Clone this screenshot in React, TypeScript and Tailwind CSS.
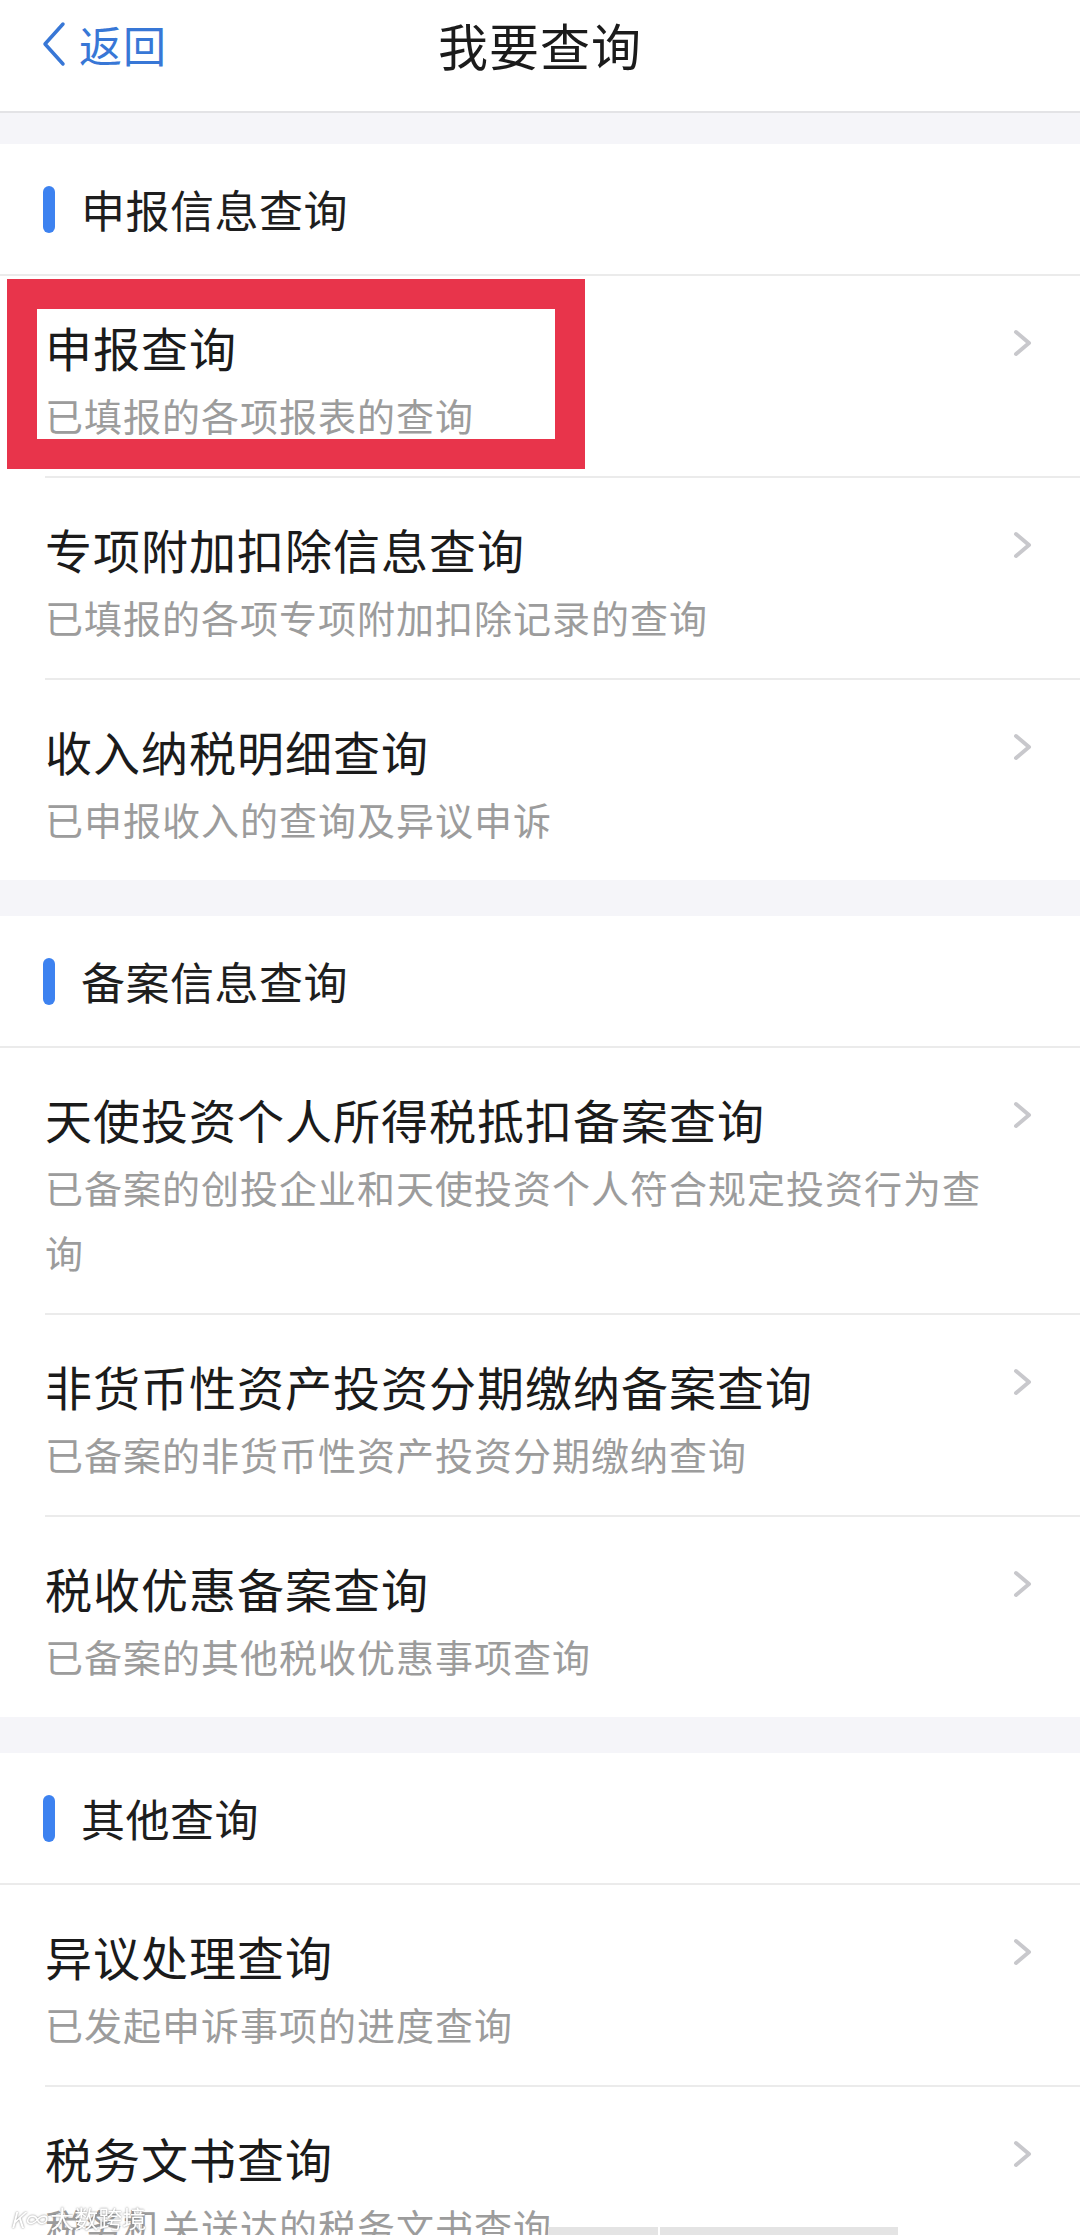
import React from "react";

interface QueryItem {
    title: string;
    desc: string;
    marked?: boolean;
}

interface QuerySection {
    name: string;
    items: QueryItem[];
}

const sections: QuerySection[] = [
    {
        name: "申报信息查询",
        items: [
            { title: "申报查询", desc: "已填报的各项报表的查询", marked: true },
            { title: "专项附加扣除信息查询", desc: "已填报的各项专项附加扣除记录的查询" },
            { title: "收入纳税明细查询", desc: "已申报收入的查询及异议申诉" },
        ],
    },
    {
        name: "备案信息查询",
        items: [
            { title: "天使投资个人所得税抵扣备案查询", desc: "已备案的创投企业和天使投资个人符合规定投资行为查询" },
            { title: "非货币性资产投资分期缴纳备案查询", desc: "已备案的非货币性资产投资分期缴纳查询" },
            { title: "税收优惠备案查询", desc: "已备案的其他税收优惠事项查询" },
        ],
    },
    {
        name: "其他查询",
        items: [
            { title: "异议处理查询", desc: "已发起申诉事项的进度查询" },
            { title: "税务文书查询", desc: "税务机关送达的税务文书查询" },
        ],
    },
];

const Chevron = () => (
    <svg width="21" height="30" viewBox="0 0 21 30" fill="none">
        <polyline points="4,4 17,15 4,26" stroke="#c8c8cc" strokeWidth="4" strokeLinecap="round" strokeLinejoin="round" />
    </svg>
);

const Row = ({ item, first }: { item: QueryItem; first: boolean }) => (
    <div className="relative">
        {!first && <div className="ml-[45px] h-[2px] bg-[#ebebeb]" />}
        <div className="flex items-start gap-[18px] pl-[45px] pr-[47px] pt-[41px] pb-[29px]">
            <div className="flex-1 min-w-0">
                <div className="text-[47px] tracking-[1px] leading-[60px] text-[#1b1b1b]">{item.title}</div>
                <div className="mt-[5px] text-[38px] tracking-[1px] leading-[65px] text-[#9c9c9c]">{item.desc}</div>
            </div>
            <div className="mt-[11px] shrink-0">
                <Chevron />
            </div>
        </div>
        {/* red highlight annotation */}
        {item.marked && (
            <div className="pointer-events-none absolute left-[7px] top-[3px] h-[190px] w-[578px] border-[30px] border-[#e8344b]" />
        )}
    </div>
);

export default function App() {
    return (
        <div
            className="min-h-screen bg-[#f5f5f9]"
            style={{ fontFamily: '"Noto Sans CJK SC", "Noto Sans", sans-serif' }}
        >
            {/* nav bar */}
            <header className="grid h-[113px] grid-cols-[1fr_auto_1fr] items-start border-b-2 border-[#e3e3e6] bg-white pt-[16px]">
                <div className="flex items-center gap-[12px] pl-[41px] text-[#3877d6]">
                    <svg width="26" height="46" viewBox="0 0 26 46" fill="none">
                        <polyline points="22,3 4,23 22,43" stroke="currentColor" strokeWidth="3.5" strokeLinecap="round" strokeLinejoin="round" />
                    </svg>
                    <span className="text-[43px] tracking-[1px] leading-[56px]">返回</span>
                </div>
                <h1 className="text-[50px] tracking-[1px] leading-[56px] text-[#1b1b1b]">我要查询</h1>
                <div />
            </header>

            <div className="pt-[31px]">
                {sections.map((sec, i) => (
                    <section key={sec.name} className={i > 0 ? "mt-[36px] bg-white" : "bg-white"}>
                        <div className="flex h-[130px] items-center gap-[26px] pl-[43px]">
                            <span className="h-[47px] w-[12px] rounded-full bg-[#3d82f0]" />
                            <span className="text-[44px] tracking-[0.5px] leading-[56px] text-[#1e1e1e]">{sec.name}</span>
                        </div>
                        <div className="h-[2px] bg-[#ebebeb]" />
                        {sec.items.map((item, j) => (
                            <Row key={item.title} item={item} first={j === 0} />
                        ))}
                    </section>
                ))}
            </div>

            {/* video watermark and bottom strip */}
            <div className="pointer-events-none fixed bottom-[2px] left-[10px] flex items-center gap-[4px] text-[24px] leading-[30px] text-white [text-shadow:0_0_2px_#777]">
                <span className="text-[22px] italic">K∞</span>
                <span>大数跨境</span>
            </div>
            <div className="pointer-events-none fixed bottom-0 left-[548px] flex h-[8px] w-[350px] gap-[2px]">
                <div className="w-[110px] bg-[#e4e4e4]" />
                <div className="flex-1 bg-[#e4e4e4]" />
            </div>
        </div>
    );
}
